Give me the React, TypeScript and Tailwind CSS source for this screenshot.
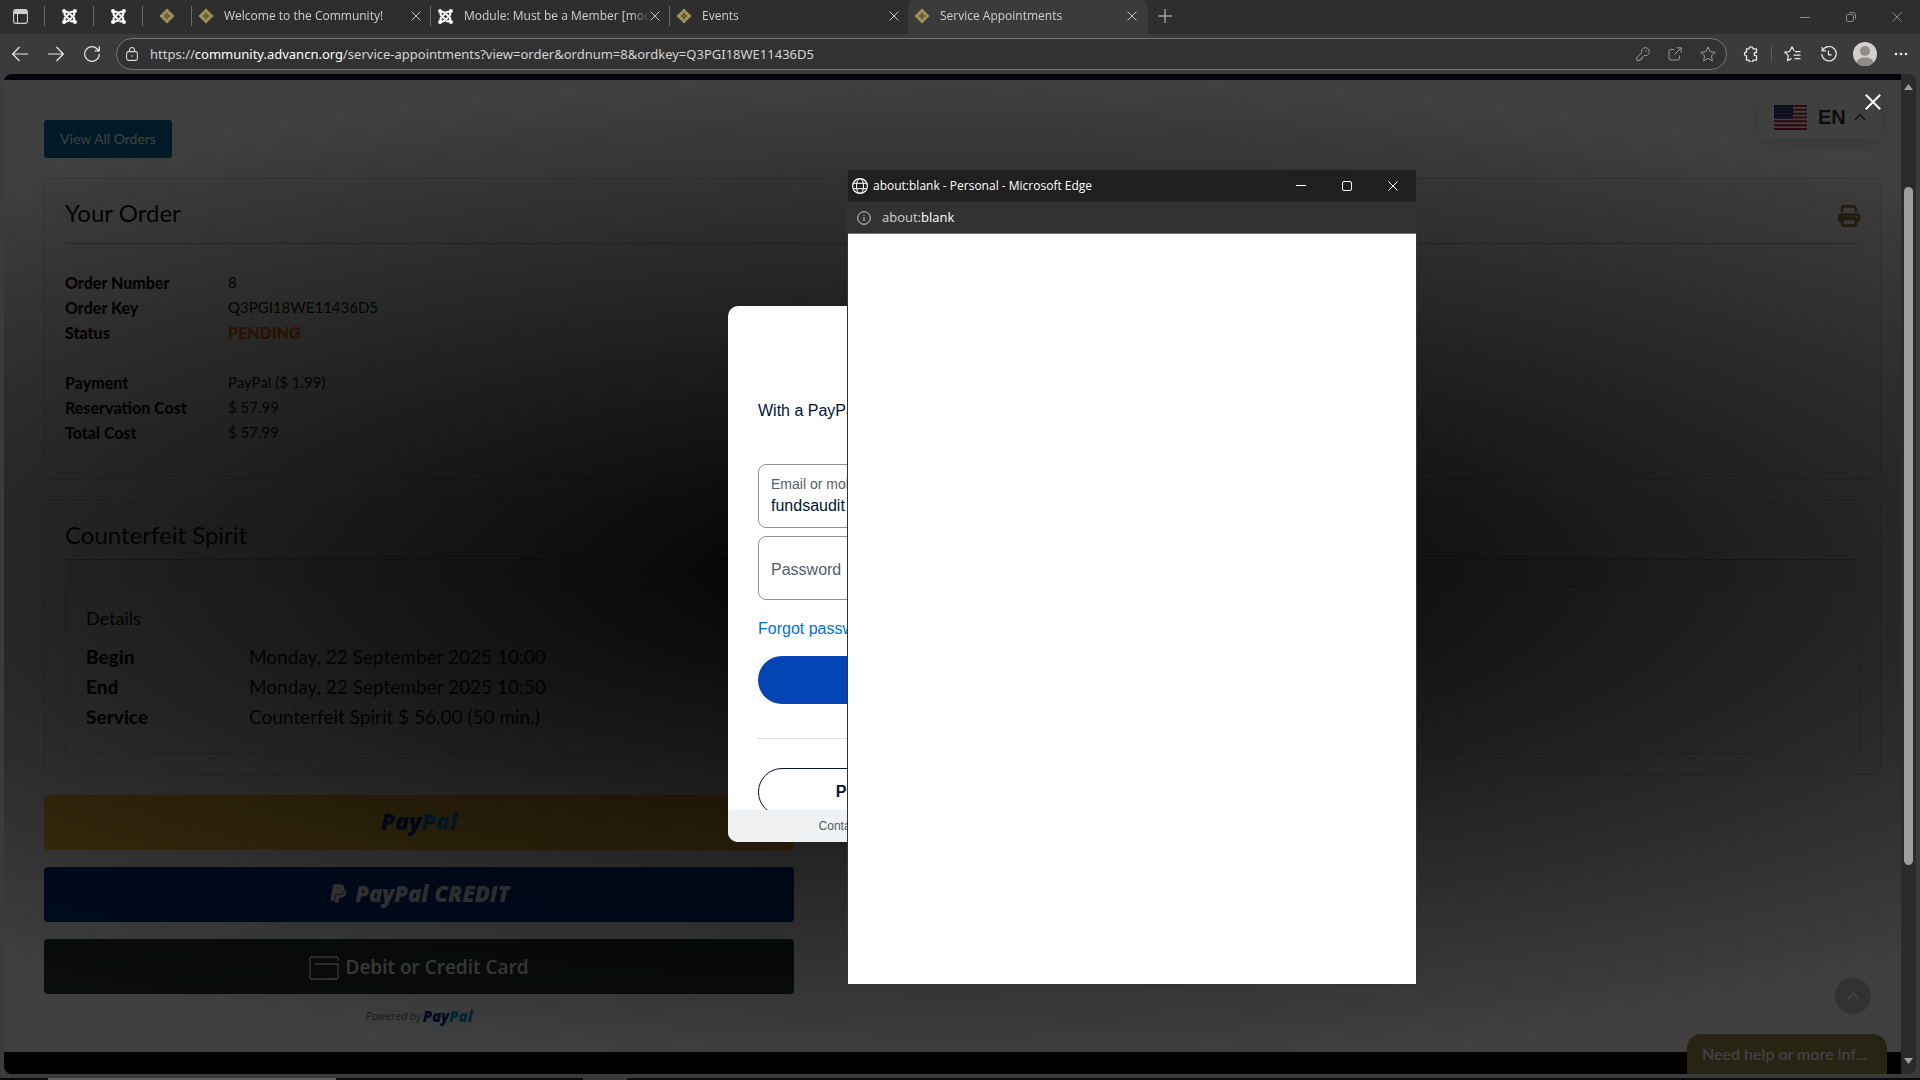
import { FaJoomla, FaPaypal, FaPrint } from 'react-icons/fa6'

const orderRows = [
  { label: 'Order Number', value: '8' },
  { label: 'Order Key', value: 'Q3PGI18WE11436D5' },
  { label: 'Status', value: 'PENDING', pending: true },
]

const costRows = [
  { label: 'Payment', value: 'PayPal ($ 1.99)' },
  { label: 'Reservation Cost', value: '$ 57.99' },
  { label: 'Total Cost', value: '$ 57.99' },
]

const detailRows = [
  { label: 'Begin', value: 'Monday, 22 September 2025 10:00' },
  { label: 'End', value: 'Monday, 22 September 2025 10:50' },
  { label: 'Service', value: 'Counterfeit Spirit $ 56.00 (50 min.)' },
]

function Diamond() {
  return (
    <svg className="shrink-0" width="16" height="16" viewBox="0 0 16 16" aria-hidden="true">
      <path d="M8 0.5 15.5 8 8 15.5 0.5 8Z" fill="#a3985a" />
      <path d="M8 5.2 10.8 8 8 10.8 5.2 8Z" fill="#4a4630" />
      <path d="M8 7 9 8 8 9 7 8Z" fill="#a3985a" />
      <path
        d="M5.5 3 13 10.5M3 5.5l7.5 7.5M10.5 3 3 10.5M13 5.5 5.5 13"
        stroke="#5c5738"
        strokeWidth="0.6"
        fill="none"
      />
    </svg>
  )
}

function Cross({ size = 10, width = 1 }: { size?: number; width?: number }) {
  return (
    <svg width={size} height={size} viewBox="0 0 10 10" fill="none" stroke="currentColor" aria-hidden="true">
      <path d="M0.5 0.5 9.5 9.5M9.5 0.5 0.5 9.5" strokeWidth={width} />
    </svg>
  )
}

function PinnedTab({ kind }: { kind: 'joomla' | 'diamond' }) {
  return (
    <button
      aria-label="Pinned tab"
      className="flex h-5 w-[49px] items-center justify-center border-l border-[#6b6b6b]"
    >
      {kind === 'joomla' ? <FaJoomla className="text-white" size={17} /> : <Diamond />}
    </button>
  )
}

function Tab({ title, kind, active }: { title: string; kind: 'joomla' | 'diamond'; active?: boolean }) {
  return (
    <div
      className={
        active
          ? '-mb-0.5 flex w-[240px] items-center self-stretch rounded-t-lg bg-[#3b3b3b] pr-[11px] pb-0.5 pl-[6px]'
          : 'flex h-5 w-[239px] items-center border-l border-[#6b6b6b] pr-[9px] pl-[6px]'
      }
    >
      {kind === 'joomla' ? <FaJoomla className="shrink-0 text-white" size={17} /> : <Diamond />}
      <span className="ml-[10px] grow overflow-hidden text-[12px] leading-5 whitespace-nowrap text-[#d0d0d0] mask-r-from-90%">
        {title}
      </span>
      <button aria-label="Close tab" className="text-[#c4c4c4]">
        <Cross />
      </button>
    </div>
  )
}

function TabStrip() {
  return (
    <div className="flex h-[34px] shrink-0 items-center bg-[#2e2e2e] pb-0.5">
      <button aria-label="Tab actions" className="flex w-11 pl-[13px]">
        <svg width="15" height="15" viewBox="0 0 15 15" fill="none" aria-hidden="true">
          <rect x="0.6" y="0.6" width="13.8" height="13.8" rx="2.4" stroke="#d0d0d0" strokeWidth="1.1" />
          <path d="M1 3a2 2 0 0 1 2-2h9a2 2 0 0 1 2 2v2H1Z" fill="#d0d0d0" />
          <path d="M4.5 5v9" stroke="#d0d0d0" />
        </svg>
      </button>
      <PinnedTab kind="joomla" />
      <PinnedTab kind="joomla" />
      <PinnedTab kind="diamond" />
      <Tab title="Welcome to the Community!" kind="diamond" />
      <Tab title="Module: Must be a Member [mod" kind="joomla" />
      <Tab title="Events" kind="diamond" />
      <Tab title="Service Appointments" kind="diamond" active />
      <button aria-label="New tab" className="ml-[10px]">
        <svg width="14" height="14" viewBox="0 0 14 14" stroke="#d0d0d0" aria-hidden="true">
          <path d="M7 0v14M0 7h14" />
        </svg>
      </button>
      <div className="ml-auto flex items-center pt-0.5 text-[#8a8a8a]">
        <button aria-label="Minimize" className="flex w-[46px] justify-center">
          <span className="block h-px w-[10px] bg-current" />
        </button>
        <button aria-label="Restore" className="flex w-[46px] justify-center">
          <svg width="10" height="10" viewBox="0 0 10 10" fill="none" stroke="currentColor" aria-hidden="true">
            <rect x="0.5" y="2.5" width="7" height="7" rx="1.2" />
            <path d="M3 0.5h4.5a2 2 0 0 1 2 2V7" />
          </svg>
        </button>
        <button aria-label="Close" className="flex w-[46px] justify-center">
          <Cross />
        </button>
      </div>
    </div>
  )
}

function Toolbar() {
  return (
    <div className="flex h-10 shrink-0 items-center bg-[#3b3b3b] text-[#e8e8e8]">
      <div className="flex w-[116px] items-center gap-5 pl-3">
        <button aria-label="Back">
          <svg width="16" height="16" viewBox="0 0 16 16" fill="none" stroke="currentColor" aria-hidden="true">
            <path d="M16 8H0.8M7.5 1 0.7 8l6.8 7" strokeWidth="1.2" />
          </svg>
        </button>
        <button aria-label="Forward">
          <svg width="16" height="16" viewBox="0 0 16 16" fill="none" stroke="currentColor" aria-hidden="true">
            <path d="M0 8h15.2M8.5 1l6.8 7-6.8 7" strokeWidth="1.2" />
          </svg>
        </button>
        <button aria-label="Refresh">
          <svg width="16" height="16" viewBox="0 0 16 16" fill="none" stroke="currentColor" aria-hidden="true">
            <path d="M15.3 8A7.3 7.3 0 1 1 13 2.7L15.3 4.8M15.3 0.3v4.6H10.7" strokeWidth="1.2" />
          </svg>
        </button>
      </div>

      <form className="flex h-8 grow items-center rounded-full border border-[#757575] bg-[#323232] pr-[10px] pl-[9px]">
        <svg width="12" height="14" viewBox="0 0 12 14" fill="none" stroke="#d8d8d8" aria-hidden="true">
          <rect x="0.6" y="4.6" width="10.8" height="8.8" rx="1.8" strokeWidth="1.1" />
          <path d="M3.5 4.5V3a2.5 2.5 0 0 1 5 0v1.5" strokeWidth="1.1" />
          <circle cx="6" cy="9" r="0.8" fill="#d8d8d8" stroke="none" />
        </svg>
        <a
          href="#"
          className="ml-3 grow overflow-hidden font-['Noto_Sans',sans-serif] text-[13px] leading-5 whitespace-nowrap text-[#d4d4d4]"
        >
          https://<span className="text-white">community.advancn.org</span>
          /service-appointments?view=order&amp;ordnum=8&amp;ordkey=Q3PGI18WE11436D5
        </a>
        <div className="flex items-center gap-[18px] text-[#9a9a9a]">
          <button type="button" aria-label="Passwords">
            <svg width="14" height="14" viewBox="0 0 14 14" fill="none" stroke="currentColor" aria-hidden="true">
              <path d="M9.3 0.7a4 4 0 1 1-1.2 7.8L6.8 9.8v1.3H5.3v1.4H3.9v0.9H0.8v-2.7l4.8-4.9A4 4 0 0 1 9.3 0.7Z" />
              <circle cx="10" cy="4" r="0.8" fill="currentColor" stroke="none" />
            </svg>
          </button>
          <button type="button" aria-label="Open in app">
            <svg width="14" height="14" viewBox="0 0 14 14" fill="none" stroke="currentColor" aria-hidden="true">
              <path d="M6 2.5H3a2 2 0 0 0-2 2V11a2 2 0 0 0 2 2h6.5a2 2 0 0 0 2-2V8.5M8.5 0.8h4.7v4.7M13 1 6.5 7.5" />
            </svg>
          </button>
          <button type="button" aria-label="Favorite">
            <svg width="16" height="16" viewBox="0 0 16 16" fill="none" stroke="currentColor" aria-hidden="true">
              <path
                d="m8 1 2.1 4.7 5.1.6-3.8 3.5 1 5.1L8 12.4l-4.4 2.5 1-5.1L.8 6.3l5.1-.6Z"
                strokeLinejoin="round"
              />
            </svg>
          </button>
        </div>
      </form>

      <div className="flex items-center pr-3 pl-4">
        <button aria-label="Extensions">
          <svg width="16" height="16" viewBox="0 0 16 16" fill="none" stroke="currentColor" aria-hidden="true">
            <path
              d="M3.5 2.8H6a2 2 0 0 1 4 0h3.5v3.7h-.8a1.6 1.6 0 0 0 0 3.2h.8v4.5H10a2 2 0 0 1-4 0H3.5V10a2 2 0 0 1 0-4Z"
              strokeWidth="1.3"
              strokeLinejoin="round"
            />
          </svg>
        </button>
        <span className="ml-3 h-4 w-px bg-[#5c5c5c]" />
        <button aria-label="Favorites" className="ml-3">
          <svg width="17" height="16" viewBox="0 0 17 16" fill="none" stroke="currentColor" aria-hidden="true">
            <path
              d="M10.2 5 8 .8 5.6 5.6.8 6.2l3.5 3.4-.9 5L7.5 12.6M11 5.6h5.5M9.5 9.1h7M10.5 12.6h6"
              strokeWidth="1.2"
              strokeLinejoin="round"
            />
          </svg>
        </button>
        <button aria-label="History" className="ml-5">
          <svg width="16" height="16" viewBox="0 0 16 16" fill="none" stroke="currentColor" aria-hidden="true">
            <path d="M1.2 1v3.8H5M1.5 4.6A7.2 7.2 0 1 1 .8 8M7.5 4.5v4.3h3.2" strokeWidth="1.2" />
          </svg>
        </button>
        <button aria-label="Profile" className="ml-4">
          <svg width="24" height="24" viewBox="0 0 24 24" aria-hidden="true">
            <clipPath id="avatar">
              <circle cx="12" cy="12" r="12" />
            </clipPath>
            <g clipPath="url(#avatar)">
              <rect width="24" height="24" fill="#d2d0ce" />
              <circle cx="12" cy="9" r="5" fill="#8f8b88" />
              <path d="M4 20c0-3 3.5-4.5 8-4.5s8 1.5 8 4.5v4H4Z" fill="#8f8b88" />
            </g>
          </svg>
        </button>
        <button aria-label="Settings and more" className="ml-[17px]">
          <svg width="14" height="4" viewBox="0 0 14 4" fill="currentColor" aria-hidden="true">
            <circle cx="2" cy="2" r="1.3" />
            <circle cx="7" cy="2" r="1.3" />
            <circle cx="12" cy="2" r="1.3" />
          </svg>
        </button>
      </div>
    </div>
  )
}

function OrderRow({ label, value, pending }: { label: string; value: string; pending?: boolean }) {
  return (
    <div className="flex">
      <dt className="w-[163px] shrink-0 font-black">{label}</dt>
      <dd className={pending ? 'font-black text-[#ff6a00]' : 'text-[15px] leading-[25px]'}>{value}</dd>
    </div>
  )
}

function OrderPage() {
  return (
    <main className="grow bg-white pt-10 pr-5 pl-10 font-[Lato,sans-serif] text-[#111]">
      <button className="flex h-[38px] w-32 items-center justify-center rounded-[3px] bg-[#00699a] pb-0.5 text-[14px] text-white">
        View All Orders
      </button>

      <section className="mt-5 rounded-[3px] border border-[#ddd] bg-[#fafafa] px-5 pt-5 pb-[34px]">
        <div className="flex items-end justify-between border-b border-[#bbb] pb-4">
          <h2 className="text-[24px] leading-7">Your Order</h2>
          <button aria-label="Print" className="text-[#8f8035]">
            <FaPrint size={22} />
          </button>
        </div>
        <dl className="mt-[26px] text-[16px] leading-[25px]">
          {orderRows.map((row) => (
            <OrderRow key={row.label} {...row} />
          ))}
        </dl>
        <dl className="mt-[25px] text-[16px] leading-[25px]">
          {costRows.map((row) => (
            <OrderRow key={row.label} {...row} />
          ))}
        </dl>
      </section>

      <section className="mt-5 rounded-[3px] border border-[#ddd] bg-[#fafafa] p-5">
        <h2 className="border-b border-[#bbb] pb-[10px] text-[24px] leading-7">Counterfeit Spirit</h2>
        <div className="bg-[#f0f0f0] pt-[27px]">
          <div className="rounded-[3px] border border-[#ddd] bg-[#fafafa] px-5 pt-[18px] pb-[21px]">
            <h3 className="text-[18px] leading-6">Details</h3>
            <dl className="mt-3 text-[19px] leading-[30px]">
              {detailRows.map((row) => (
                <div key={row.label} className="flex">
                  <dt className="w-[163px] shrink-0 font-black">{row.label}</dt>
                  <dd>{row.value}</dd>
                </div>
              ))}
            </dl>
          </div>
        </div>
      </section>

      <div className="mt-5 flex max-w-[750px] flex-col gap-[17px]">
        <button
          aria-label="PayPal"
          className="h-[55px] rounded-[4px] bg-[#ffc439] pb-0.5 font-['Open_Sans',sans-serif] text-[23px] font-extrabold italic"
        >
          <span className="text-[#003087]">Pay</span>
          <span className="text-[#009cde]">Pal</span>
        </button>
        <button className="flex h-[55px] items-center justify-center gap-[6px] rounded-[4px] bg-[#003087] pb-0.5 font-['Open_Sans',sans-serif] text-[22px] font-extrabold italic text-white">
          <FaPaypal size={21} />
          <span>PayPal CREDIT</span>
        </button>
        <button className="flex h-[55px] items-center justify-center gap-[6px] rounded-[4px] bg-[#2c2e2f] pt-0.5 font-['Open_Sans',sans-serif] text-[19px] font-semibold text-white">
          <svg width="30" height="24" viewBox="0 0 30 24" fill="none" stroke="currentColor" aria-hidden="true">
            <path
              d="M29 5V2.5A1.5 1.5 0 0 0 27.5 1h-25A1.5 1.5 0 0 0 1 2.5v19A1.5 1.5 0 0 0 2.5 23h25a1.5 1.5 0 0 0 1.5-1.5V8H6"
              strokeWidth="1.3"
            />
          </svg>
          <span>Debit or Credit Card</span>
        </button>
      </div>
      <p className="mt-3 flex max-w-[750px] items-center justify-center gap-px font-['Open_Sans',sans-serif] text-[11px] leading-5 italic text-[#6c7378]">
        Powered by
        <span className="text-[15px] font-extrabold">
          <span className="text-[#003087]">Pay</span>
          <span className="text-[#009cde]">Pal</span>
        </span>
      </p>
    </main>
  )
}

function LanguageSwitcher() {
  return (
    <button className="absolute top-[19px] right-5 flex h-[46px] w-[122px] items-center bg-white pt-0.5 pl-[15px] shadow-[0_4px_16px_rgba(0,0,0,0.15)]">
      <svg width="33" height="25" viewBox="0 0 33 25" aria-hidden="true">
        <rect width="33" height="25" rx="2" fill="#fff" />
        <path
          d="M0 1h33M0 4.8h33M0 8.7h33M0 12.5h33M0 16.3h33M0 20.2h33M0 24h33"
          stroke="#b22234"
          strokeWidth="2"
        />
        <rect width="19" height="13.5" fill="#2b3a6b" />
        <path d="M1.5 2.5h17M1.5 5.5h17M1.5 8.5h17M1.5 11.5h17" stroke="#8f9abb" strokeDasharray="1 2" />
      </svg>
      <span className="ml-[11px] font-['Liberation_Sans',sans-serif] text-[20px] font-bold text-[#333]">EN</span>
      <svg className="ml-2" width="12" height="8" viewBox="0 0 12 8" fill="none" stroke="#333" aria-hidden="true">
        <path d="M1 7 6 1.5 11 7" strokeWidth="1.2" />
      </svg>
    </button>
  )
}

function PayPalModal() {
  return (
    <div
      role="dialog"
      aria-label="PayPal"
      className="flex h-[536px] w-[449px] flex-col overflow-hidden rounded-[10px] bg-white font-['Liberation_Sans',sans-serif] text-[16px] text-[#001435]"
    >
      <div className="min-h-0 grow overflow-hidden px-[30px]">
        <p className="mt-[93px] leading-6 whitespace-nowrap">With a PayPal account, you are eligible</p>
        <div className="mt-[41px] flex h-16 flex-col justify-center rounded-lg border border-[#8f949c] px-3">
          <label htmlFor="email" className="text-[14px] leading-5 text-[#545d68]">
            Email or mobile number
          </label>
          <input id="email" className="h-6 leading-6 outline-none" defaultValue="fundsaudit" />
        </div>
        <label htmlFor="password" className="sr-only">
          Password
        </label>
        <input
          id="password"
          type="password"
          placeholder="Password"
          className="mt-2 block h-16 w-full rounded-lg border border-[#8f949c] px-3 pt-1 outline-none placeholder:text-[#545d68]"
        />
        <a href="#" className="mt-[17px] block leading-6 text-[#0070e0]">
          Forgot password?
        </a>
        <button aria-label="Log In" className="mt-[15px] block h-12 w-full rounded-full bg-[#0544b5]" />
        <hr className="mt-[34px] border-[#d5d7dc]" />
        <button className="mt-[29px] h-12 w-full rounded-full border border-[#001435] pr-3 font-bold">
          Pay with Debit or Credit Card
        </button>
      </div>
      <div className="flex h-8 shrink-0 items-center justify-center gap-7 bg-[#eff1f3] text-[12px] text-[#545d68]">
        <a href="#">Contact Us</a>
        <a href="#">Privacy</a>
        <a href="#">Legal</a>
        <a href="#">Worldwide</a>
      </div>
    </div>
  )
}

function BlankWindow() {
  return (
    <div className="absolute top-[170px] left-[848px] flex h-[814px] w-[568px] flex-col bg-white outline outline-[#333]">
      <div className="flex h-8 shrink-0 items-center border-b border-[#2a2a2a] bg-[#202020] pl-1 text-white">
        <svg width="16" height="16" viewBox="0 0 16 16" fill="none" stroke="currentColor" aria-hidden="true">
          <circle cx="8" cy="8" r="7.4" strokeWidth="1.2" />
          <ellipse cx="8" cy="8" rx="3.5" ry="7.4" />
          <path d="M1.2 5.3h13.6M1.2 10.7h13.6" />
        </svg>
        <span className="ml-[5px] text-[12px]">about:blank - Personal - Microsoft Edge</span>
        <div className="ml-auto flex items-center">
          <button aria-label="Minimize" className="flex w-[46px] justify-center">
            <span className="block h-px w-[10px] bg-white" />
          </button>
          <button aria-label="Maximize" className="flex w-[46px] justify-center">
            <span className="block size-[10px] rounded-[2px] border border-white" />
          </button>
          <button aria-label="Close" className="flex w-[46px] justify-center">
            <Cross />
          </button>
        </div>
      </div>
      <div className="flex h-8 shrink-0 items-center border-b border-[#777] bg-[#323232] pl-[9px] text-[13px] text-[#d0d0d0]">
        <svg width="14" height="14" viewBox="0 0 14 14" fill="none" stroke="currentColor" aria-hidden="true">
          <circle cx="7" cy="7" r="6.3" />
          <path d="M7 6v4M7 3.8v1" />
        </svg>
        <span className="ml-[11px]">
          about:<span className="text-white">blank</span>
        </span>
      </div>
    </div>
  )
}

function Scrollbar() {
  return (
    <div className="flex w-[15px] shrink-0 flex-col items-center bg-[#2b2b2b] py-[10px]">
      <svg width="9" height="6" viewBox="0 0 9 6" fill="#a0a0a0" aria-hidden="true">
        <path d="M4.5 0 9 6H0Z" />
      </svg>
      <div className="mt-[97px] h-[678px] w-[9px] rounded-full bg-[#9e9e9e]" />
      <svg className="mt-auto" width="9" height="6" viewBox="0 0 9 6" fill="#a0a0a0" aria-hidden="true">
        <path d="M4.5 6 9 0H0Z" />
      </svg>
    </div>
  )
}

export default function App() {
  return (
    <div className="relative flex h-screen flex-col overflow-hidden bg-[#3b3b3b] font-['Open_Sans',sans-serif]">
      <TabStrip />
      <Toolbar />

      <div className="mx-1 mb-1 flex min-h-0 grow overflow-hidden rounded-lg">
        <div className="relative flex grow flex-col overflow-hidden">
          <div className="h-[6px] shrink-0 bg-[#081828]" />
          <OrderPage />
          <div className="h-[22px] shrink-0 bg-black" />

          <LanguageSwitcher />
          <button
            aria-label="Back to top"
            className="absolute right-[30px] bottom-[60px] flex size-9 items-center justify-center rounded-full bg-[#c8c8c8]"
          >
            <svg width="13" height="8" viewBox="0 0 13 8" fill="none" stroke="#fff" aria-hidden="true">
              <path d="M1 7 6.5 1.5 12 7" strokeWidth="2.2" />
            </svg>
          </button>
          <button className="absolute right-[14px] bottom-0 h-10 w-[200px] rounded-t-[14px] bg-[#a09050] px-[15px] text-left font-[Lato,sans-serif] text-[16px] font-semibold whitespace-nowrap text-white">
            Need help or more inf...
          </button>

          {/* checkout overlay dims everything in the page */}
          <div className="absolute inset-0 flex items-start justify-center bg-[radial-gradient(84%_50%_at_50%_50%,#000_1%,rgba(0,0,0,0.75)_100%)] pt-[232px]">
            <PayPalModal />
            <button aria-label="Close checkout" className="absolute top-5 right-5 text-white">
              <Cross size={16} width={1.2} />
            </button>
          </div>
        </div>
        <Scrollbar />
      </div>

      <div className="flex h-[2px] shrink-0 bg-[#0d0a0c] pl-12">
        <div className="w-72 bg-[#5f5c5c]" />
        <div className="ml-[247px] w-11 bg-[#3a3838]" />
      </div>

      <BlankWindow />
    </div>
  )
}
